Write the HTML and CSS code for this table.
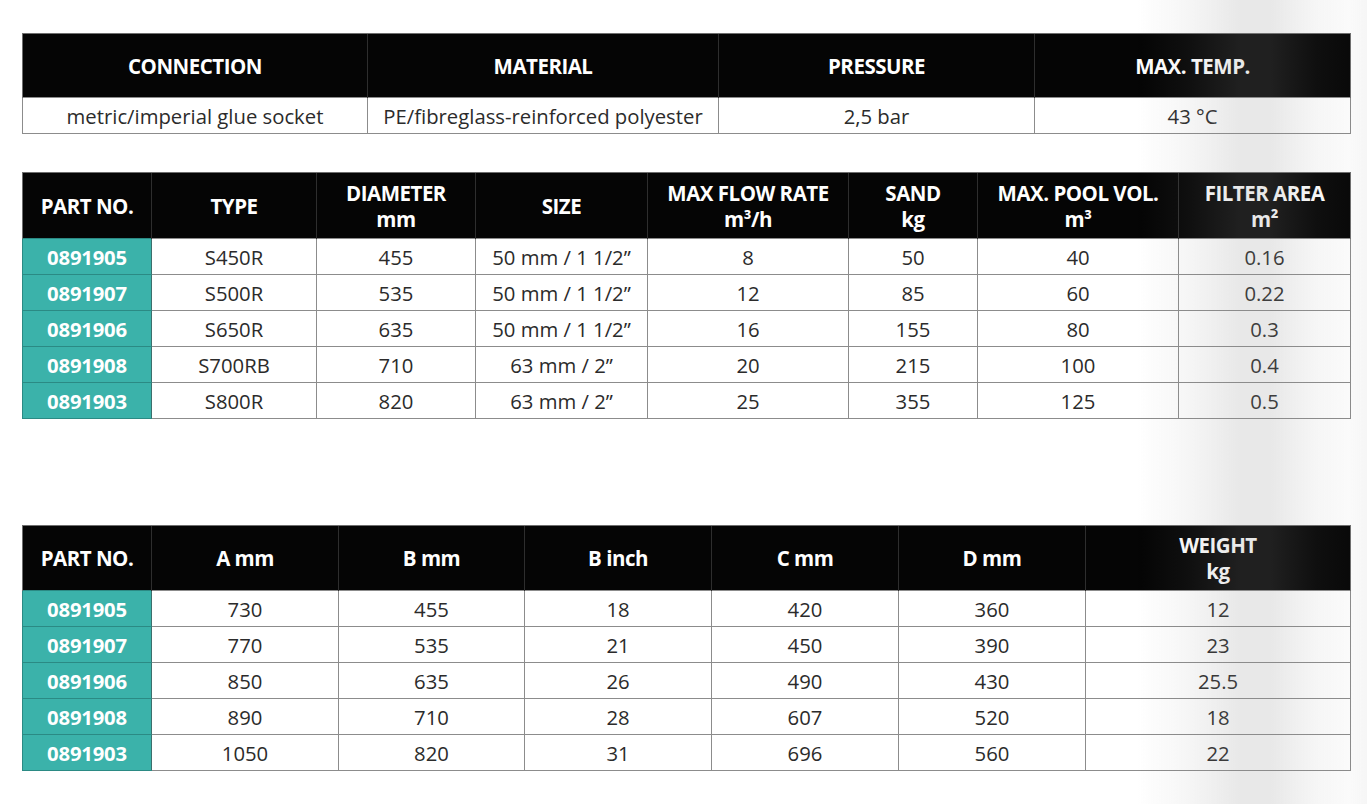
FILE: index.html
```html
<!DOCTYPE html>
<html lang="en">
<head>
<meta charset="utf-8">
<title>Sand filter specifications</title>
<link rel="stylesheet" href="styles.css">
</head>
<body>
<main class="page">
  <table class="spec spec-general">
    <colgroup>
      <col class="w345"><col class="w351"><col class="w316"><col class="w316">
    </colgroup>
    <thead>
      <tr><th>CONNECTION</th><th>MATERIAL</th><th>PRESSURE</th><th>MAX. TEMP.</th></tr>
    </thead>
    <tbody>
      <tr><td>metric/imperial glue socket</td><td>PE/fibreglass-reinforced polyester</td><td>2,5 bar</td><td>43 °C</td></tr>
    </tbody>
  </table>

  <table class="spec spec-perf">
    <colgroup>
      <col class="w129"><col class="w165"><col class="w159"><col class="w172"><col class="w201"><col class="w129"><col class="w201"><col class="w172">
    </colgroup>
    <thead>
      <tr>
        <th>PART NO.</th><th>TYPE</th><th>DIAMETER<br>mm</th><th>SIZE</th><th>MAX FLOW RATE<br>m³/h</th><th>SAND<br>kg</th><th>MAX. POOL VOL.<br>m³</th><th>FILTER AREA<br>m²</th>
      </tr>
    </thead>
    <tbody>
      <tr><td class="part">0891905</td><td>S450R</td><td>455</td><td>50 mm / 1 1/2”</td><td>8</td><td>50</td><td>40</td><td>0.16</td></tr>
      <tr><td class="part">0891907</td><td>S500R</td><td>535</td><td>50 mm / 1 1/2”</td><td>12</td><td>85</td><td>60</td><td>0.22</td></tr>
      <tr><td class="part">0891906</td><td>S650R</td><td>635</td><td>50 mm / 1 1/2”</td><td>16</td><td>155</td><td>80</td><td>0.3</td></tr>
      <tr><td class="part">0891908</td><td>S700RB</td><td>710</td><td>63 mm / 2”</td><td>20</td><td>215</td><td>100</td><td>0.4</td></tr>
      <tr><td class="part">0891903</td><td>S800R</td><td>820</td><td>63 mm / 2”</td><td>25</td><td>355</td><td>125</td><td>0.5</td></tr>
    </tbody>
  </table>

  <table class="spec spec-dims">
    <colgroup>
      <col class="w129"><col class="w187"><col class="w186"><col class="w187"><col class="w187"><col class="w187"><col class="w265">
    </colgroup>
    <thead>
      <tr>
        <th>PART NO.</th><th>A mm</th><th>B mm</th><th>B inch</th><th>C mm</th><th>D mm</th><th>WEIGHT<br>kg</th>
      </tr>
    </thead>
    <tbody>
      <tr><td class="part">0891905</td><td>730</td><td>455</td><td>18</td><td>420</td><td>360</td><td>12</td></tr>
      <tr><td class="part">0891907</td><td>770</td><td>535</td><td>21</td><td>450</td><td>390</td><td>23</td></tr>
      <tr><td class="part">0891906</td><td>850</td><td>635</td><td>26</td><td>490</td><td>430</td><td>25.5</td></tr>
      <tr><td class="part">0891908</td><td>890</td><td>710</td><td>28</td><td>607</td><td>520</td><td>18</td></tr>
      <tr><td class="part">0891903</td><td>1050</td><td>820</td><td>31</td><td>696</td><td>560</td><td>22</td></tr>
    </tbody>
  </table>
</main>
<div class="shade" aria-hidden="true"></div>
</body>
</html>
```

FILE: styles.css
```css
html, body {
  margin: 0;
  padding: 0;
  background: #ffffff;
}

body {
  font-family: "Open Sans", "Noto Sans", "Liberation Sans", sans-serif;
  color: #2b2b2b;
  width: 1367px;
  height: 804px;
  overflow: hidden;
}

.page {
  display: flex;
  flex-direction: column;
  padding: 33px 0 0 22px;
}

.spec {
  border-collapse: collapse;
  table-layout: fixed;
  width: 1328px;
}

.spec-perf {
  margin-top: 38px;
}

.spec-dims {
  margin-top: 106px;
}

.w129 { width: 129px; }
.w159 { width: 159px; }
.w165 { width: 165px; }
.w172 { width: 172px; }
.w186 { width: 186px; }
.w187 { width: 187px; }
.w201 { width: 201px; }
.w265 { width: 265px; }
.w316 { width: 316px; }
.w345 { width: 345px; }
.w351 { width: 351px; }

.spec th {
  background: #050505;
  color: #ffffff;
  font-weight: 700;
  font-size: 20.5px;
  line-height: 26px;
  letter-spacing: -0.5px;
  text-align: center;
  vertical-align: middle;
  padding: 0 2px;
  border-left: 1px solid #2e2e2e;
  border-top: 1px solid #6e6e6e;
}

.spec th:first-child {
  border-left: 1px solid #6e6e6e;
}

.spec th:last-child {
  border-right: 1px solid #6e6e6e;
}

.spec thead tr {
  height: 64px;
}

.spec-perf thead tr {
  height: 66px;
}

.spec-dims thead tr {
  height: 65px;
}

.spec td {
  font-size: 20.3px;
  line-height: 24px;
  text-align: center;
  vertical-align: middle;
  padding: 1px 2px 0;
  border: 1.5px solid #8c8c8c;
  color: #2b2b2b;
}

.spec tbody tr {
  height: 36px;
}

.spec td.part {
  background: #3bb2aa;
  color: #ffffff;
  font-weight: 700;
  letter-spacing: -0.2px;
  border-color: #2b8a84;
  border-right-color: #3c6f6c;
}

.shade {
  position: fixed;
  top: 0;
  right: 0;
  width: 230px;
  height: 804px;
  pointer-events: none;
  background: linear-gradient(to right,
    rgba(140, 140, 140, 0) 0%,
    rgba(140, 140, 140, 0.08) 22%,
    rgba(140, 140, 140, 0.2) 45%,
    rgba(140, 140, 140, 0.2) 58%,
    rgba(140, 140, 140, 0.08) 78%,
    rgba(140, 140, 140, 0.04) 92%,
    rgba(140, 140, 140, 0.08) 100%);
}
```
